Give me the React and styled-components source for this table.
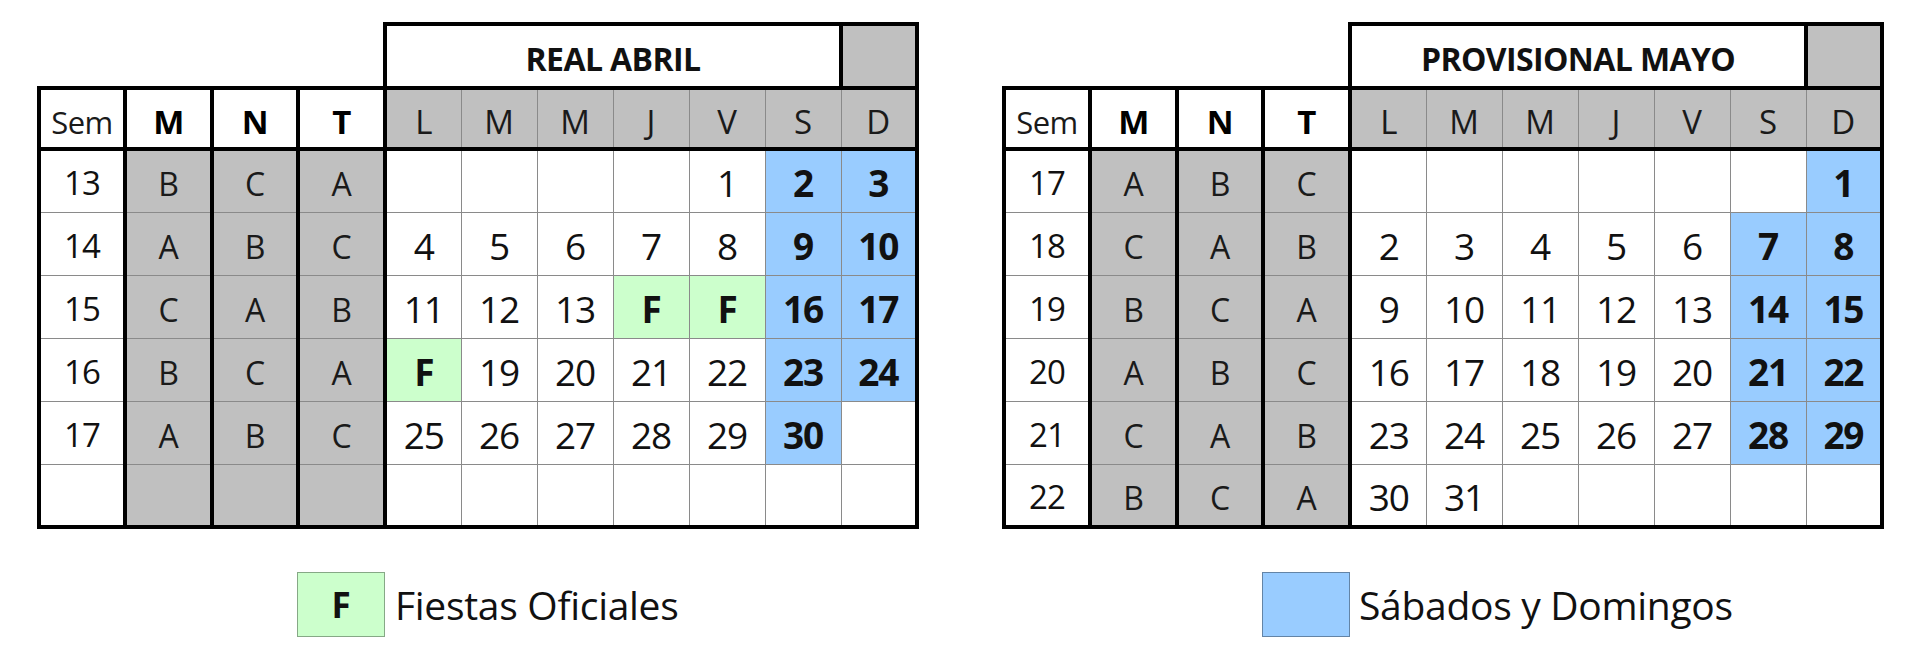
import React from "react";
import styled, { createGlobalStyle } from "styled-components";

const GlobalStyle = createGlobalStyle`
  body {
    margin: 0;
    background: #fff;
    color: #111;
    font-family: "Open Sans", "Noto Sans", sans-serif;
  }
`;

const fills = {
  white: "#ffffff",
  grey: "#c0c0c0",
  blue: "#99ccff",
  green: "#ccffcc",
};

const LINE = "1px solid #8a8a8a";
const THICK = "4px solid #000";

const Page = styled.div`
  display: flex;
  gap: 83px;
  padding: 22px 0 0 37px;
`;

const Panel = styled.div`
  display: flex;
  flex-direction: column;
`;

const Table = styled.table`
  border-collapse: collapse;
  table-layout: fixed;
  width: 882px;
`;

const TitleRow = styled.tr`
  height: 64px;
`;

const HeadRow = styled.tr`
  height: 61px;
`;

const BodyRow = styled.tr`
  height: 63px;
  &:last-child td {
    border-bottom: ${THICK};
  }
`;

const Blank = styled.td`
  border: none;
  padding: 0;
`;

const TitleCell = styled.td`
  border: ${THICK};
  padding: 5px 0 0;
  text-align: center;
  font-size: 32px;
  font-weight: 700;
  letter-spacing: -0.6px;
`;

const CornerCell = styled.td`
  border: ${THICK};
  background: ${fills.grey};
`;

const HeadCell = styled.td`
  border: ${THICK};
  padding: 6px 0 0;
  text-align: center;
  font-size: ${(p) => (p.$bold ? 33 : 31)}px;
  font-weight: ${(p) => (p.$bold ? 700 : 400)};
  color: ${(p) => (p.$bold ? "#000" : "#1a1a1a")};
  letter-spacing: -0.5px;
`;

const DayHead = styled.td`
  border: ${LINE};
  border-top: ${THICK};
  border-bottom: ${THICK};
  padding: 6px 0 0;
  background: ${fills.grey};
  text-align: center;
  font-size: 33px;
  color: #1a1a1a;
  &:last-child {
    border-right: ${THICK};
  }
`;

const SemCell = styled.td`
  border: ${LINE};
  border-left: ${THICK};
  border-right: ${THICK};
  padding: 3px 0 0;
  text-align: center;
  font-size: 33px;
  letter-spacing: -0.8px;
`;

const ShiftCell = styled.td`
  border: ${LINE};
  border-left: ${THICK};
  border-right: ${THICK};
  padding: 5px 0 0;
  background: ${fills.grey};
  text-align: center;
  font-size: 32px;
  color: #1a1a1a;
`;

const DayCell = styled.td`
  border: ${LINE};
  padding: 3px 0 0;
  background: ${(p) => fills[p.$fill]};
  text-align: center;
  font-size: 37px;
  font-weight: ${(p) => (p.$fill === "white" ? 400 : 700)};
  letter-spacing: -1.2px;
  &:last-child {
    border-right: ${THICK};
  }
`;

const Legend = styled.div`
  display: flex;
  align-items: center;
  gap: ${(p) => p.$gap}px;
  margin: 43px 0 0 260px;
`;

const Swatch = styled.div`
  width: 86px;
  height: 63px;
  display: flex;
  align-items: center;
  justify-content: center;
  border: 1px solid ${(p) => p.$border};
  background: ${(p) => fills[p.$fill]};
  font-size: 35px;
  font-weight: 700;
`;

const LegendText = styled.span`
  font-size: 39px;
  letter-spacing: -0.3px;
`;

const DAYS = ["L", "M", "M", "J", "V", "S", "D"];

// a day cell: "" empty, number, "F" holiday; weekends are the last two columns
function dayFill(value, col) {
  if (value === "F") return "green";
  if (value !== "" && col >= 5) return "blue";
  return "white";
}

const april = [
  ["13", "B", "C", "A", ["", "", "", "", "1", "2", "3"]],
  ["14", "A", "B", "C", ["4", "5", "6", "7", "8", "9", "10"]],
  ["15", "C", "A", "B", ["11", "12", "13", "F", "F", "16", "17"]],
  ["16", "B", "C", "A", ["F", "19", "20", "21", "22", "23", "24"]],
  ["17", "A", "B", "C", ["25", "26", "27", "28", "29", "30", ""]],
  ["", "", "", "", ["", "", "", "", "", "", ""]],
];

const may = [
  ["17", "A", "B", "C", ["", "", "", "", "", "", "1"]],
  ["18", "C", "A", "B", ["2", "3", "4", "5", "6", "7", "8"]],
  ["19", "B", "C", "A", ["9", "10", "11", "12", "13", "14", "15"]],
  ["20", "A", "B", "C", ["16", "17", "18", "19", "20", "21", "22"]],
  ["21", "C", "A", "B", ["23", "24", "25", "26", "27", "28", "29"]],
  ["22", "B", "C", "A", ["30", "31", "", "", "", "", ""]],
];

function Calendar({ title, rows }) {
  return (
    <Table>
      <colgroup>
        <col style={{ width: 86 }} />
        <col style={{ width: 87 }} />
        <col style={{ width: 86 }} />
        <col style={{ width: 87 }} />
        {DAYS.map((d, i) => (
          <col key={i} style={{ width: 76 }} />
        ))}
      </colgroup>
      <tbody>
        <TitleRow>
          <Blank colSpan={4} />
          <TitleCell colSpan={6}>{title}</TitleCell>
          <CornerCell />
        </TitleRow>
        <HeadRow>
          <HeadCell>Sem</HeadCell>
          <HeadCell $bold>M</HeadCell>
          <HeadCell $bold>N</HeadCell>
          <HeadCell $bold>T</HeadCell>
          {DAYS.map((d, i) => (
            <DayHead key={i}>{d}</DayHead>
          ))}
        </HeadRow>
        {rows.map(([sem, m, n, t, days], r) => (
          <BodyRow key={r}>
            <SemCell>{sem}</SemCell>
            <ShiftCell>{m}</ShiftCell>
            <ShiftCell>{n}</ShiftCell>
            <ShiftCell>{t}</ShiftCell>
            {days.map((v, c) => (
              <DayCell key={c} $fill={dayFill(v, c)}>
                {v}
              </DayCell>
            ))}
          </BodyRow>
        ))}
      </tbody>
    </Table>
  );
}

export default function App() {
  return (
    <>
      <GlobalStyle />
      <Page>
        <Panel>
          <Calendar title="REAL ABRIL" rows={april} />
          <Legend $gap={10}>
            <Swatch $fill="green" $border="#86a886">
              F
            </Swatch>
            <LegendText>Fiestas Oficiales</LegendText>
          </Legend>
        </Panel>
        <Panel>
          <Calendar title="PROVISIONAL MAYO" rows={may} />
          <Legend $gap={9}>
            <Swatch $fill="blue" $border="#6384a6" />
            <LegendText>Sábados y Domingos</LegendText>
          </Legend>
        </Panel>
      </Page>
    </>
  );
}
